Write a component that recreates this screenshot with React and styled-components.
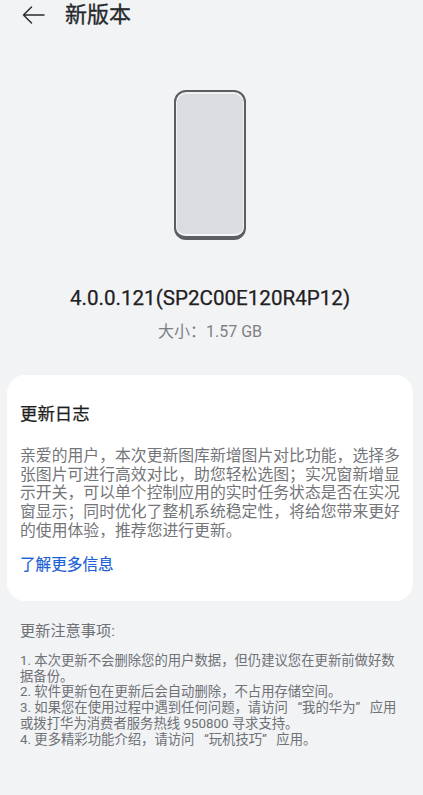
import React from "react";
import styled, { createGlobalStyle } from "styled-components";

const Global = createGlobalStyle`
  html, body { margin: 0; padding: 0; background: #f1f3f5; }
  body { font-family: Roboto, "Noto Sans CJK SC", sans-serif; }
`;

const Page = styled.div`
  width: 423px;
  height: 795px;
  overflow: hidden;
  background: #f1f3f5;
  display: flex;
  flex-direction: column;
`;

const Header = styled.header`
  height: 30px;
  display: flex;
  align-items: center;
  padding-left: 22px;
  gap: 20px;
`;

const BackIcon = styled.svg`
  width: 23px;
  height: 20px;
  flex: none;
`;

const Title = styled.h1`
  margin: 0;
  font-size: 22px;
  line-height: 30px;
  font-weight: 400;
  -webkit-text-stroke: 0.3px #26282b;
  color: #26282b;
`;

const Hero = styled.section`
  width: 420px;
  display: flex;
  flex-direction: column;
  align-items: center;
  padding-top: 60px;
`;

const Phone = styled.div`
  box-sizing: border-box;
  width: 72px;
  height: 150px;
  border-radius: 12px;
  border: 2px solid #5c5d62;
  border-bottom-width: 4px;
  background: #dbdce0;
  box-shadow: inset 0 1px 0 1px #eff0f2, inset 0 -2px 0 0 #f3f4f5;
`;

const Version = styled.div`
  margin-top: 44px;
  font-size: 20.6px;
  line-height: 28px;
  font-weight: 400;
  -webkit-text-stroke: 0.25px #1f2022;
  color: #1f2022;
`;

const Size = styled.div`
  margin-top: 9px;
  font-size: 16px;
  line-height: 22px;
  color: #7d7f83;
`;

const Card = styled.section`
  box-sizing: border-box;
  margin: 32px 10px 0 7px;
  height: 226px;
  padding: 27px 10px 0 13px;
  background: #fff;
  border-radius: 18px;
`;

const CardTitle = styled.h2`
  margin: 0;
  font-size: 17.4px;
  line-height: 24px;
  font-weight: 400;
  -webkit-text-stroke: 0.25px #1d1e20;
  color: #1d1e20;
`;

const Body = styled.p`
  margin: 21px 0 0;
  font-size: 15.83px;
  line-height: 18.7px;
  color: #737579;
`;

const LearnMore = styled.a`
  display: block;
  margin-top: 13px;
  font-size: 15.6px;
  line-height: 22px;
  font-weight: 400;
  -webkit-text-stroke: 0.2px #1d5fd6;
  color: #1d5fd6;
`;

const Notes = styled.section`
  padding: 19px 26px 0 20px;
`;

const NotesTitle = styled.div`
  font-size: 15.2px;
  line-height: 22px;
  color: #6f7175;
`;

const NotesList = styled.ol`
  margin: 11px 0 0;
  padding: 0;
  list-style: none;
  font-size: 13.35px;
  line-height: 15.7px;
  color: #6f7175;
`;

const Note = styled.li``;

const C = "\uFF0C";
const S = "\uFF1B";
const K = "\uFF1A";
const QL = "\u2002\u2009\u201C";
const QR = "\u201D\u2002\u2009";

export default function App() {
  return (
    <Page>
      <Global />
      <Header>
        <BackIcon viewBox="0 0 23 20" fill="none" stroke="#2a2c2f" strokeWidth="1.5" strokeLinecap="round" strokeLinejoin="round">
          <path d="M22 10H1.5M9.5 2L1.5 10l8 8" />
        </BackIcon>
        <Title>新版本</Title>
      </Header>
      <Hero>
        <Phone />
        <Version>4.0.0.121(SP2C00E120R4P12)</Version>
        <Size>{`大小${K}1.57 GB`}</Size>
      </Hero>
      <Card>
        <CardTitle>更新日志</CardTitle>
        <Body>
          {`亲爱的用户${C}本次更新图库新增图片对比功能${C}选择多张图片可进行高效对比${C}助您轻松选图${S}实况窗新增显示开关${C}可以单个控制应用的实时任务状态是否在实况窗显示${S}同时优化了整机系统稳定性${C}将给您带来更好的使用体验${C}推荐您进行更新。`}
        </Body>
        <LearnMore>了解更多信息</LearnMore>
      </Card>
      <Notes>
        <NotesTitle>更新注意事项:</NotesTitle>
        <NotesList>
          <Note>{`1. 本次更新不会删除您的用户数据${C}但仍建议您在更新前做好数据备份。`}</Note>
          <Note>{`2. 软件更新包在更新后会自动删除${C}不占用存储空间。`}</Note>
          <Note>{`3. 如果您在使用过程中遇到任何问题${C}请访问${QL}我的华为${QR}应用或拨打华为消费者服务热线 950800 寻求支持。`}</Note>
          <Note>{`4. 更多精彩功能介绍${C}请访问${QL}玩机技巧${QR}应用。`}</Note>
        </NotesList>
      </Notes>
    </Page>
  );
}
